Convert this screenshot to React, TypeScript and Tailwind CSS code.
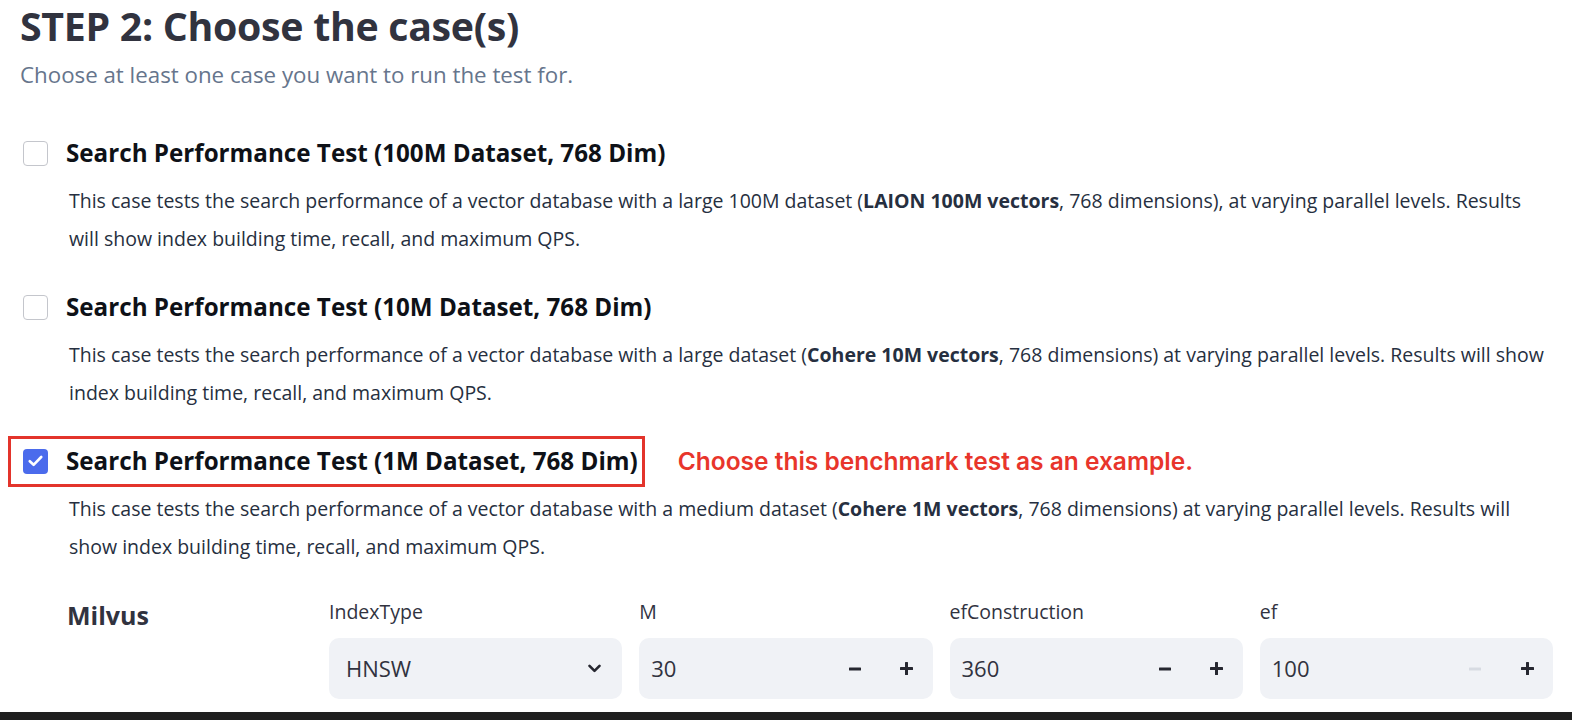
import { useState } from "react";

type Case = {
  id: string;
  title: string;
  before: string;
  bold: string;
  after: string;
};

const CASES: Case[] = [
  {
    id: "100m",
    title: "Search Performance Test (100M Dataset, 768 Dim)",
    before:
      "This case tests the search performance of a vector database with a large 100M dataset (",
    bold: "LAION 100M vectors",
    after:
      ", 768 dimensions), at varying parallel levels. Results will show index building time, recall, and maximum QPS.",
  },
  {
    id: "10m",
    title: "Search Performance Test (10M Dataset, 768 Dim)",
    before:
      "This case tests the search performance of a vector database with a large dataset (",
    bold: "Cohere 10M vectors",
    after:
      ", 768 dimensions) at varying parallel levels. Results will show index building time, recall, and maximum QPS.",
  },
  {
    id: "1m",
    title: "Search Performance Test (1M Dataset, 768 Dim)",
    before:
      "This case tests the search performance of a vector database with a medium dataset (",
    bold: "Cohere 1M vectors",
    after:
      ", 768 dimensions) at varying parallel levels. Results will show index building time, recall, and maximum QPS.",
  },
];

function CheckBox({ checked, onClick }: { checked: boolean; onClick: () => void }) {
  return (
    <button
      onClick={onClick}
      className={
        checked
          ? "w-[25px] h-[25px] rounded-[4px] bg-[#4b6bec] flex items-center justify-center shrink-0"
          : "w-[25px] h-[25px] rounded-[4px] border-[1.5px] border-[#c4c6cc] bg-white shrink-0"
      }
    >
      {checked && (
        <svg width="15" height="12" viewBox="0 0 15 12" fill="none">
          <path
            d="M1.8 6.2 L5.6 9.8 L13.2 2"
            stroke="white"
            strokeWidth="2.6"
            strokeLinecap="round"
            strokeLinejoin="round"
          />
        </svg>
      )}
    </button>
  );
}

function Minus({ disabled }: { disabled?: boolean }) {
  return (
    <svg width="12" height="4" viewBox="0 0 12 4">
      <rect x="0" y="0.5" width="12" height="3" rx="0.5" fill={disabled ? "#d7dbe2" : "#262730"} />
    </svg>
  );
}

function Plus() {
  return (
    <svg width="13" height="13" viewBox="0 0 13 13">
      <rect x="0" y="5" width="13" height="3" rx="0.5" fill="#262730" />
      <rect x="5" y="0" width="3" height="13" rx="0.5" fill="#262730" />
    </svg>
  );
}

function NumberBox({ label, value, min }: { label: string; value: number; min?: boolean }) {
  return (
    <div className="flex flex-col gap-[14px]">
      <div className="text-[19.5px] leading-[24px] text-[#31333f]">{label}</div>
      <div className="h-[61px] rounded-[10px] bg-[#f0f2f6] flex items-center">
        <span className="flex-1 pl-[12px] text-[22px] text-[#31333f]">{value}</span>
        <span className="w-[52px] h-full flex items-center justify-center">
          <Minus disabled={min} />
        </span>
        <span className="w-[52px] h-full flex items-center justify-center">
          <Plus />
        </span>
      </div>
    </div>
  );
}

export default function App() {
  const [checked, setChecked] = useState<Record<string, boolean>>({ "1m": true });

  return (
    <div className="w-[1572px] h-[720px] bg-white flex flex-col overflow-hidden font-['Open_Sans',sans-serif]">
      <div className="flex-1 px-5">
        {/* HEADER */}
        <h1 className="text-[39.3px] leading-[52px] font-bold text-[#31333f] tracking-[-0.3px]">
          STEP 2: Choose the case(s)
        </h1>
        <p className="mt-[9px] text-[22.3px] leading-[28px] text-[#66758c]">
          Choose at least one case you want to run the test for.
        </p>

        {/* CASES */}
        <div className="mt-[48px] flex flex-col">
          {CASES.map((c, i) => {
            const highlight = c.id === "1m";
            const row = (
              <div className="flex items-center gap-[18px] h-[32px]">
                <CheckBox
                  checked={!!checked[c.id]}
                  onClick={() => setChecked({ ...checked, [c.id]: !checked[c.id] })}
                />
                <span className="text-[24.2px] font-bold text-[#0e1117] whitespace-nowrap">
                  {c.title}
                </span>
              </div>
            );
            return (
              <div key={c.id} className={i > 0 ? "mt-[33px]" : ""}>
                {highlight ? (
                  <div className="flex items-center -ml-3 -my-[9.5px]">
                    <div className="border-[3px] border-[#e3342b] pl-3 pr-[4px] py-[6.5px]">
                      {row}
                    </div>
                    <span className="ml-[33px] text-[24.5px] font-semibold text-[#e8352b] font-['Inter',sans-serif]">
                      Choose this benchmark test as an example.
                    </span>
                  </div>
                ) : (
                  <div className="pl-[3px]">{row}</div>
                )}
                <p className="mt-[13px] ml-[49px] text-[19.5px] leading-[38px] text-[#262f40]">
                  {c.before}
                  <b className="font-bold">{c.bold}</b>
                  {c.after}
                </p>
              </div>
            );
          })}
        </div>

        {/* MILVUS CONFIG */}
        <div className="mt-[34px] grid grid-cols-[292px_1fr_1fr_1fr_1fr] gap-x-[17px] w-[1533px]">
          <div className="pl-[47px] -mt-[3px] text-[25px] font-bold text-[#31333f]">
            Milvus
          </div>
          <div className="flex flex-col gap-[14px]">
            <div className="text-[19.5px] leading-[24px] text-[#31333f]">IndexType</div>
            <div className="h-[61px] rounded-[10px] bg-[#f0f2f6] flex items-center justify-between pl-[17px] pr-[21px]">
              <span className="text-[22px] text-[#31333f]">HNSW</span>
              <svg width="13" height="9" viewBox="0 0 13 9" fill="none">
                <path
                  d="M1.5 1.8 L6.5 6.8 L11.5 1.8"
                  stroke="#262730"
                  strokeWidth="2.6"
                  strokeLinecap="round"
                  strokeLinejoin="round"
                />
              </svg>
            </div>
          </div>
          <NumberBox label="M" value={30} />
          <NumberBox label="efConstruction" value={360} />
          <NumberBox label="ef" value={100} min />
        </div>
      </div>
      <div className="h-[8px] bg-[#1f1f1f]" />
    </div>
  );
}
